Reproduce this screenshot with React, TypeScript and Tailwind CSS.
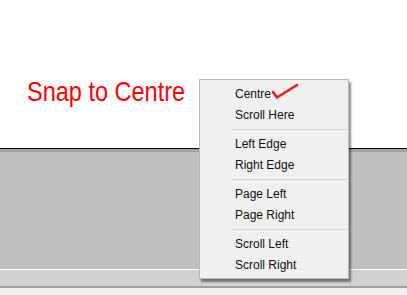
import React from 'react';

type MenuEntry = { label: string } | { separator: true };

const entries: MenuEntry[] = [
  { label: 'Centre' },
  { label: 'Scroll Here' },
  { separator: true },
  { label: 'Left Edge' },
  { label: 'Right Edge' },
  { separator: true },
  { label: 'Page Left' },
  { label: 'Page Right' },
  { separator: true },
  { label: 'Scroll Left' },
  { label: 'Scroll Right' },
];

const ContextMenu: React.FC = () => {
  return (
    <div className="absolute left-[199px] top-[79px] w-[150px] bg-[#f0f0f0] border border-[#b9b9b9] py-[3px] shadow-[2px_3px_2px_rgba(0,0,0,0.45)]">
      {entries.map((entry, i) =>
        'separator' in entry ? (
          <div key={i} className="h-[8px] flex items-center pl-[32px] pr-[1px]">
            <div className="w-full h-[1px] bg-[#d7d7d7]" />
          </div>
        ) : (
          <div
            key={i}
            className="h-[21px] flex items-center pl-[35px] text-[12px] text-[#111]"
          >
            {entry.label}
          </div>
        )
      )}
      {/* hand drawn tick next to Centre */}
      <svg
        className="absolute left-[71px] top-[3px]"
        width="30"
        height="17"
        viewBox="0 0 30 17"
      >
        <path
          d="M2 9 L6 14.5 L26 2"
          fill="none"
          stroke="#ee1c24"
          strokeWidth="2.6"
          strokeLinecap="round"
          strokeLinejoin="round"
        />
      </svg>
    </div>
  );
};

export default function App() {
  return (
    <div
      className="relative w-[407px] h-[295px] bg-white overflow-hidden"
      style={{ fontFamily: '"Liberation Sans", Arial, sans-serif' }}
    >
      <div className="h-[148px] pt-[82px] pl-[27px]">
        <div className="text-[23.5px] leading-[24px] text-[#ff0000] origin-bottom-left scale-y-[1.14]">
          Snap to Centre
        </div>
      </div>
      <div className="h-[1px] bg-black" />
      <div className="h-[3px] bg-[#a3a3a3]" />
      <div className="h-[117px] bg-[#c0c0c0]" />
      <div className="h-[1px] bg-white" />
      <div className="h-[16px] bg-[#d1d1d1]" />
      <div className="h-[2px] bg-[#a0a0a0]" />
      <div className="h-[7px] bg-[#f0f0f0]" />
      <ContextMenu />
    </div>
  );
}
